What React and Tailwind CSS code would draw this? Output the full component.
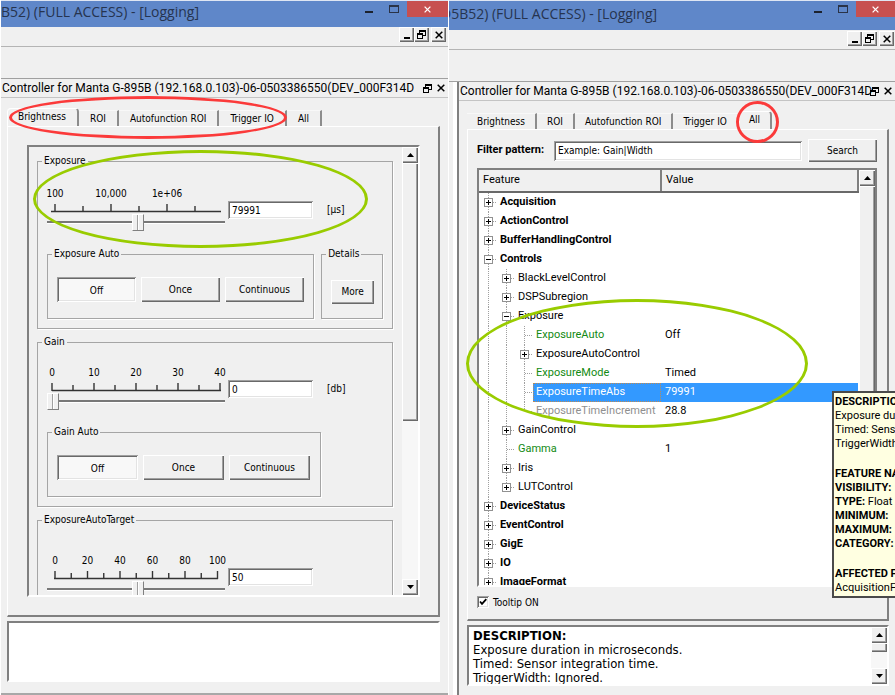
import { useState } from "react";

const UI = "[font-family:'DejaVu_Sans_Condensed','DejaVu_Sans',sans-serif]";
const SEGOE = "[font-family:Roboto,'Open_Sans',sans-serif]";
const TITLE = "[font-family:'Open_Sans','Noto_Sans',sans-serif]";

const RAISED = "bg-[#f0f0f0] shadow-[inset_1px_1px_#ffffff,inset_-1px_-1px_#696969,inset_-2px_-2px_#a0a0a0]";
const SUNKEN = "shadow-[inset_1px_1px_#a0a0a0,inset_-1px_-1px_#ffffff,inset_2px_2px_#696969,inset_-2px_-2px_#e3e3e3]";
const FRAME = "border-t-2 border-l-2 border-t-[#808080] border-l-[#808080] border-r-2 border-b-2 border-r-white border-b-white";

function RestoreIcon() {
  return (
    <svg viewBox="0 0 9 9" className="h-[9px] w-[9px]" fill="none" stroke="#000" shapeRendering="crispEdges">
      <path d="M2.5 3V.5h6v5H6M2.5 1.5h6" />
      <path d="M.5 3.5h5v5h-5zM.5 4.5h5" />
    </svg>
  );
}

function CrossIcon({ color = "#000", size = "h-2 w-2" }) {
  return (
    <svg viewBox="0 0 8 8" className={size} fill="none" stroke={color} strokeWidth="1.5">
      <path d="M.7.7l6.6 6.6M7.3.7L.7 7.3" />
    </svg>
  );
}

function TitleBar({ text, className, titleClass, closeClass }) {
  return (
    <header className={`flex shrink-0 overflow-hidden border-t border-[#dfe6f3] bg-[#5f87c9] ${className}`}>
      <div className="flex min-w-0 flex-1 items-center overflow-hidden pb-1">
        <h1 className={`${TITLE} text-sm whitespace-nowrap text-[#26344f] ${titleClass}`}>{text}</h1>
      </div>
      <button aria-label="Minimize" className="flex h-4 w-[26px] items-end justify-center pb-1">
        <span className="h-0.5 w-2 bg-[#1c222e]" />
      </button>
      <button aria-label="Maximize" className="flex h-4 w-6 items-center justify-center">
        <span className="h-2 w-2.5 border border-t-2 border-[#2a3347]" />
      </button>
      <button aria-label="Close" className={`ml-px flex h-4 items-center justify-center bg-[#c75050] ${closeClass}`}>
        <CrossIcon color="#fff" size="h-[7px] w-[7px]" />
      </button>
    </header>
  );
}

function MdiBar({ className }) {
  const button = `flex h-[15px] w-[15px] items-center justify-center ${RAISED}`;
  return (
    <div className={`flex shrink-0 justify-end border-b border-[#b4b4b4] ${className}`}>
      <button aria-label="Minimize document" className={button}>
        <span className="mt-1.5 h-0.5 w-1.5 bg-black" />
      </button>
      <button aria-label="Restore document" className={button}>
        <RestoreIcon />
      </button>
      <button aria-label="Close document" className={`ml-0.5 ${button}`}>
        <CrossIcon />
      </button>
    </div>
  );
}

function DockTitle({ className }) {
  return (
    <div className={`flex shrink-0 items-center border-b border-[#c4c4c4] ${className}`}>
      <h2 className={`${SEGOE} min-w-0 flex-1 text-xs leading-4 whitespace-nowrap text-black`}>
        Controller for Manta G-895B (192.168.0.103)-06-0503386550(DEV_000F314D
      </h2>
      <button aria-label="Float panel" className="w-3.5">
        <RestoreIcon />
      </button>
      <button aria-label="Close panel" className="w-[11px]">
        <CrossIcon />
      </button>
    </div>
  );
}

const TABS = ["Brightness", "ROI", "Autofunction ROI", "Trigger IO", "All"];

function Tabs({ active, padding }) {
  return (
    <div role="tablist" className="mt-2.5 flex shrink-0 items-end">
      {TABS.map((tab, i) => {
        const on = tab === active;
        const beforeActive = TABS[i + 1] === active;
        return (
          <button
            key={tab}
            role="tab"
            aria-selected={on}
            className={`${UI} border-t border-r-2 text-[10px] whitespace-nowrap ${padding} ${
              on
                ? "h-[18px] rounded-t-sm border-t-white border-r-[#8c8c8c] pb-1 shadow-[inset_1px_0_#fff]"
                : `h-4 border-t-[#f8f8f8] ${beforeActive ? "border-r-transparent" : "border-r-[#8c8c8c]"}`
            }`}
          >
            {tab}
          </button>
        );
      })}
    </div>
  );
}

function ArrowButton({ down, label }) {
  return (
    <button aria-label={label} className={`flex h-4 w-full shrink-0 items-center justify-center ${RAISED}`}>
      <svg viewBox="0 0 7 4" className="h-1 w-[7px]">
        <path d={down ? "M0 0h7L3.5 4z" : "M0 4h7L3.5 0z"} />
      </svg>
    </button>
  );
}

function Scrollbar({ thumb, showDown = true }) {
  return (
    <div className="flex w-4 shrink-0 flex-col bg-[#f7f7f7]">
      <ArrowButton label="Scroll up" />
      <div className="min-h-0 flex-1">
        <div className={`w-full ${RAISED} ${thumb}`} />
      </div>
      {showDown && <ArrowButton down label="Scroll down" />}
    </div>
  );
}

function Group({ title, className = "", children }) {
  return (
    <fieldset className={`min-w-0 border border-[#a5a5a5] px-[9px] shadow-[1px_1px_#fff] ${className}`}>
      <legend className={`${UI} -ml-[5px] px-0.5 text-[10px] leading-3`}>{title}</legend>
      {children}
    </fieldset>
  );
}

function Scale({ start, end, first, step, count, labels }) {
  const ticks = Array.from({ length: count }, (_, i) => first + i * step);
  return (
    <svg viewBox="0 0 178 26" className={`${UI} h-[26px] w-[178px] overflow-visible text-[10px]`} aria-hidden="true">
      {labels.map((label, i) => (
        <text key={label} x={first + i * step * 2} y="10" textAnchor="middle">
          {label}
        </text>
      ))}
      <path d={`M${start} 24.5H${end}`} stroke="#333" strokeWidth="1.4" />
      {ticks.map((x, i) => (
        <path key={x} d={`M${x} ${i % 2 ? 19 : 17}V25`} stroke="#333" strokeWidth="1.4" />
      ))}
    </svg>
  );
}

function SliderRow({ id, name, scale, position, initial, unit }) {
  const [value, setValue] = useState(initial);
  const [level, setLevel] = useState(position);
  return (
    <div className="flex">
      <div className="flex w-[178px] flex-col">
        <Scale {...scale} />
        <input
          type="range"
          aria-label={`${name} slider`}
          min="0"
          max="100"
          value={level}
          onChange={(e) => setLevel(Number(e.target.value))}
          className="h-[18px] w-full appearance-none bg-transparent [&::-webkit-slider-runnable-track]:h-[3px] [&::-webkit-slider-runnable-track]:border-b [&::-webkit-slider-runnable-track]:border-white [&::-webkit-slider-runnable-track]:bg-[#787878] [&::-webkit-slider-thumb]:-mt-[7px] [&::-webkit-slider-thumb]:h-[17px] [&::-webkit-slider-thumb]:w-3 [&::-webkit-slider-thumb]:appearance-none [&::-webkit-slider-thumb]:border [&::-webkit-slider-thumb]:border-t-white [&::-webkit-slider-thumb]:border-r-[#808080] [&::-webkit-slider-thumb]:border-b-[#808080] [&::-webkit-slider-thumb]:border-l-white [&::-webkit-slider-thumb]:bg-[linear-gradient(90deg,#f0f0f0_4px,#a0a0a0_4px,#a0a0a0_5px,#ffffff_5px,#ffffff_6px,#f0f0f0_6px)]"
        />
      </div>
      <input
        id={id}
        aria-label={name}
        value={value}
        onChange={(e) => setValue(e.target.value)}
        className={`${UI} mt-3.5 ml-[3px] h-[18px] w-[85px] bg-white pl-1 text-[10px] ${SUNKEN}`}
      />
      <label htmlFor={id} className={`${UI} mt-[17px] ml-3.5 text-[10px] leading-3`}>
        {unit}
      </label>
    </div>
  );
}

function ModeButtons({ width }) {
  const [mode, setMode] = useState("Off");
  return (
    <div className="flex gap-[5px]">
      {["Off", "Once", "Continuous"].map((m) => (
        <button
          key={m}
          aria-pressed={m === mode}
          onClick={() => setMode(m)}
          className={`${UI} h-[25px] text-[10px] ${width} ${m === mode ? `bg-[#f8f8f8] pt-0.5 ${SUNKEN}` : RAISED}`}
        >
          {m}
        </button>
      ))}
    </div>
  );
}

function LeftPane() {
  return (
    <section className="relative flex min-w-0 flex-col overflow-hidden border-r border-l border-white bg-[#f0f0f0]">
      <TitleBar text="B52) (FULL ACCESS) - [Logging]" className="h-[27px]" titleClass="" closeClass="w-[41px]" />
      <MdiBar className="h-5 pr-0.5" />
      <div className="h-8 shrink-0 border-b border-[#a0a0a0]" />
      <DockTitle className="h-[19px] pl-px" />

      <div className="flex min-h-0 flex-1 flex-col pr-2 pb-[11px] pl-1.5">
        <Tabs active="Brightness" padding="px-[11px]" />
        <div className="flex min-h-0 flex-1 flex-col border-t border-r-2 border-b-2 border-l border-t-white border-r-[#808080] border-b-[#808080] border-l-white pt-[18px] pr-[18px] pb-[18px] pl-[19px]">
          <div className={`flex min-h-0 flex-1 ${FRAME}`}>
            <div className="flex min-w-0 flex-1 flex-col gap-[7px] overflow-hidden pt-2 pr-[9px] pl-2">
              <Group title="Exposure" className="h-[174px] shrink-0">
                <div className="pt-5">
                  <SliderRow
                    id="exposure"
                    name="Exposure"
                    unit="[μs]"
                    initial="79991"
                    position={51}
                    scale={{ start: 4, end: 174, first: 8, step: 28, count: 6, labels: ["100", "10,000", "1e+06"] }}
                  />
                </div>
                <div className="mt-[17px] flex gap-[7px]">
                  <Group title="Exposure Auto" className="h-[71px] w-[268px] pt-[17px]">
                    <ModeButtons width="w-[79px]" />
                  </Group>
                  <Group title="Details" className="h-[71px] w-[62px] pt-[17px]">
                    <button className={`${UI} h-6 w-[43px] text-[10px] ${RAISED}`}>More</button>
                  </Group>
                </div>
              </Group>

              <Group title="Gain" className="h-[171px] shrink-0">
                <div className="pt-[18px]">
                  <SliderRow
                    id="gain"
                    name="Gain"
                    unit="[db]"
                    initial="0"
                    position={0}
                    scale={{ start: 5, end: 174, first: 5, step: 21, count: 9, labels: ["0", "10", "20", "30", "40"] }}
                  />
                </div>
                <Group title="Gain Auto" className="mt-4 h-[71px] w-[274px] pt-[17px]">
                  <ModeButtons width="w-[81px]" />
                </Group>
              </Group>

              <Group title="ExposureAutoTarget" className="h-[171px] shrink-0">
                <div className="pt-7">
                  <SliderRow
                    id="target"
                    name="ExposureAutoTarget"
                    initial="50"
                    position={51}
                    scale={{ start: 7, end: 171, first: 8, step: 16.25, count: 11, labels: ["0", "20", "40", "60", "80", "100"] }}
                  />
                </div>
              </Group>
            </div>
            <Scrollbar thumb="h-[62%]" />
          </div>
        </div>
        <textarea aria-label="Description" readOnly className={`mt-1 h-[61px] shrink-0 resize-none bg-white outline-none ${FRAME}`} />
      </div>
      <div className="h-0.5 shrink-0 bg-[#a8a8a8]" />

      <div className="pointer-events-none absolute top-24 left-2 h-[43px] w-[278px] rounded-[50%] border-[3px] border-[#fb3a3a]" />
      <div className="pointer-events-none absolute top-[150px] left-8 h-[98px] w-[335px] rounded-[50%] border-[3px] border-[#99cc00]" />
    </section>
  );
}

const TREE = [
  { name: "Acquisition", level: 0, node: "plus" },
  { name: "ActionControl", level: 0, node: "plus" },
  { name: "BufferHandlingControl", level: 0, node: "plus" },
  { name: "Controls", level: 0, node: "minus" },
  { name: "BlackLevelControl", level: 1, node: "plus" },
  { name: "DSPSubregion", level: 1, node: "plus" },
  { name: "Exposure", level: 1, node: "minus" },
  { name: "ExposureAuto", level: 2, value: "Off", tone: "green" },
  { name: "ExposureAutoControl", level: 2, node: "plus" },
  { name: "ExposureMode", level: 2, value: "Timed", tone: "green" },
  { name: "ExposureTimeAbs", level: 2, value: "79991", selected: true },
  { name: "ExposureTimeIncrement", level: 2, value: "28.8", tone: "gray", last: true },
  { name: "GainControl", level: 1, node: "plus" },
  { name: "Gamma", level: 1, value: "1", tone: "green" },
  { name: "Iris", level: 1, node: "plus" },
  { name: "LUTControl", level: 1, node: "plus", last: true },
  { name: "DeviceStatus", level: 0, node: "plus" },
  { name: "EventControl", level: 0, node: "plus" },
  { name: "GigE", level: 0, node: "plus" },
  { name: "IO", level: 0, node: "plus" },
  { name: "ImageFormat", level: 0, node: "plus" },
];

const TONES = { green: "text-[#128a12]", gray: "text-[#8f8f8f]" };

function Branch({ row }) {
  const width = (row.level + 1) * 18;
  const x = row.level * 18 + 9.5;
  const guides = Array.from({ length: row.level }, (_, i) => i * 18 + 9.5);
  return (
    <svg width={width} height="19" viewBox={`0 0 ${width} 19`} className="shrink-0" fill="none" shapeRendering="crispEdges" aria-hidden="true">
      <g stroke="#a0a0a0" strokeDasharray="1 1">
        {guides.map((g) => (
          <path key={g} d={`M${g} 0V19`} />
        ))}
        <path d={`M${x} 0V${row.last ? 9 : 19}M${x} 9.5H${width}`} />
      </g>
      {row.node && (
        <>
          <rect x={x - 4} y="5.5" width="8" height="8" fill="#fff" stroke="#919191" />
          <path d={`M${x - 2.5} 9.5h5${row.node === "plus" ? `M${x} 7v5` : ""}`} stroke="#000" />
        </>
      )}
    </svg>
  );
}

function FeatureTable() {
  const heading = "border-r-2 border-b-2 border-r-[#808080] border-b-[#696969] p-0 pl-1 font-normal";
  return (
    <table className={`${SEGOE} w-full table-fixed border-collapse text-[11px] text-black`}>
      <colgroup>
        <col className="w-[182px]" />
        <col />
      </colgroup>
      <thead>
        <tr className="h-[22px] bg-[#f0f0f0] text-left">
          <th className={heading}>Feature</th>
          <th className={heading}>Value</th>
        </tr>
      </thead>
      <tbody>
        {TREE.map((row) => (
          <tr key={row.name} className="h-[19px]">
            <td className="p-0">
              <div className="flex h-[19px] items-center">
                <Branch row={row} />
                <span
                  className={`flex h-[19px] flex-1 items-center whitespace-nowrap ${row.level === 0 ? "font-bold" : ""} ${TONES[row.tone] ?? ""} ${
                    row.selected ? "border border-dotted border-[#c08a50] bg-[#3399ff] pl-0.5 text-white" : "pl-[3px]"
                  }`}
                >
                  {row.name}
                </span>
              </div>
            </td>
            <td className={`p-0 pl-1 ${row.selected ? "bg-[#3399ff] text-white" : ""}`}>{row.value}</td>
          </tr>
        ))}
      </tbody>
    </table>
  );
}

function FeatureTooltip() {
  return (
    <div
      role="tooltip"
      className={`${SEGOE} absolute top-[391px] right-0 w-[63px] overflow-hidden border-2 border-r-0 border-[#4a4a4a] bg-[#ffffe1] pt-0.5 pb-px pl-px text-[11px] leading-[14px] whitespace-nowrap`}
    >
      <p className="font-bold">DESCRIPTION:</p>
      <p>Exposure duration in microseconds.</p>
      <p>Timed: Sensor integration time.</p>
      <p>TriggerWidth: Ignored.</p>
      <p className="mt-4 font-bold">FEATURE NAME:</p>
      <p className="font-bold">VISIBILITY:</p>
      <p>
        <b>TYPE:</b> Float
      </p>
      <p className="font-bold">MINIMUM:</p>
      <p className="font-bold">MAXIMUM:</p>
      <p className="font-bold">CATEGORY:</p>
      <p className="mt-4 font-bold">AFFECTED FEATURES:</p>
      <p>AcquisitionFrameRate</p>
    </div>
  );
}

function RightPane() {
  const [filter, setFilter] = useState("Example: Gain|Width");
  const [tooltip, setTooltip] = useState(true);
  return (
    <section className="relative flex min-w-0 flex-col overflow-hidden bg-[#f0f0f0]">
      <TitleBar text="D5B52) (FULL ACCESS) - [Logging]" className="h-[30px]" titleClass="-ml-2" closeClass="w-[39px]" />
      <MdiBar className="h-5 pt-px pr-px" />
      <div className="h-8 shrink-0 border-b border-[#a0a0a0]" />

      <div className="flex min-h-0 flex-1">
        <div className="w-2 shrink-0 border-r-4 border-white" />
        <div className="flex min-w-0 flex-1 flex-col border-l-2 border-[#808080]">
          <DockTitle className="h-[19px] pl-px" />
          <div className="flex min-h-0 flex-1 flex-col pr-1.5 pb-[9px] pl-2">
            <Tabs active="All" padding="px-2.5" />
            <div className="flex min-h-0 flex-1 flex-col border-t border-r-2 border-b-2 border-l border-t-white border-r-[#808080] border-b-[#808080] border-l-white pt-[9px] pr-2.5 pb-2.5 pl-[9px]">
              <div className="flex h-[23px] shrink-0 items-center">
                <label htmlFor="filter" className={`${SEGOE} w-[77px] text-[11px] font-bold whitespace-nowrap`}>
                  Filter pattern:
                </label>
                <input
                  id="filter"
                  value={filter}
                  onChange={(e) => setFilter(e.target.value)}
                  className={`${UI} h-5 min-w-0 flex-1 bg-white pl-1 text-[10px] ${SUNKEN}`}
                />
                <button className={`${UI} ml-1.5 h-[23px] w-[69px] text-[10px] ${RAISED}`}>Search</button>
              </div>
              <div className="mt-1.5 flex min-h-0 flex-1 border-2 border-t-[#808080] border-r-[#808080] border-b-white border-l-[#808080] bg-white">
                <div className="min-w-0 flex-1 overflow-hidden">
                  <FeatureTable />
                </div>
                <Scrollbar thumb="h-[70%]" showDown={false} />
              </div>
              <label className={`${UI} mt-2 flex h-3.5 shrink-0 items-center text-[10px]`}>
                <span className="relative mr-1 grid h-3 w-3 place-items-center">
                  <input
                    type="checkbox"
                    checked={tooltip}
                    onChange={(e) => setTooltip(e.target.checked)}
                    className={`h-3 w-3 appearance-none bg-white ${SUNKEN}`}
                  />
                  {tooltip && (
                    <svg viewBox="0 0 8 8" className="pointer-events-none absolute h-2 w-2" fill="none" stroke="#000" strokeWidth="1.8">
                      <path d="M1 3.5l2 2.3L7.3 1.2" />
                    </svg>
                  )}
                </span>
                Tooltip ON
              </label>
            </div>
            <div className={`mt-1 flex h-[61px] shrink-0 bg-white ${FRAME}`}>
              <div className={`${UI} min-w-0 flex-1 overflow-hidden pt-0.5 pl-1 text-[13px] leading-[14px] whitespace-nowrap`}>
                <p className="font-bold">DESCRIPTION:</p>
                <p>Exposure duration in microseconds.</p>
                <p>Timed: Sensor integration time.</p>
                <p>TriggerWidth: Ignored.</p>
              </div>
              <Scrollbar thumb="h-[9px]" />
            </div>
          </div>
        </div>
      </div>

      {tooltip && <FeatureTooltip />}
      <div className="pointer-events-none absolute top-[101px] left-[287px] h-[42px] w-[43px] rounded-[50%] border-[3px] border-[#fb3a3a]" />
      <div className="pointer-events-none absolute top-[299px] left-[17px] h-[129px] w-[342px] rounded-[50%] border-[3px] border-[#99cc00]" />
    </section>
  );
}

export default function App() {
  return (
    <main className="grid h-screen min-h-[695px] grid-cols-[449fr_446fr] bg-white text-black">
      <LeftPane />
      <RightPane />
    </main>
  );
}
